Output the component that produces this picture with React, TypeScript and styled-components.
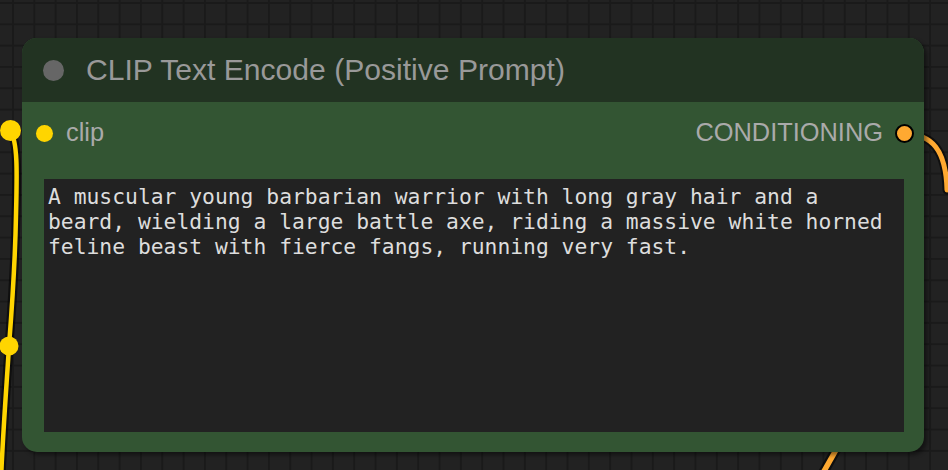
import React from "react";
import styled, { createGlobalStyle } from "styled-components";

const GlobalStyle = createGlobalStyle`
  html, body {
    margin: 0;
    padding: 0;
    background: #222222;
    overflow: hidden;
  }
`;

const Canvas = styled.div`
  position: relative;
  width: 948px;
  height: 470px;
  box-sizing: border-box;
  padding: 38px 0 0 22px;
  overflow: hidden;
  background-color: #222222;
  background-image:
    linear-gradient(to right, #1a1a1a 2px, transparent 2px),
    linear-gradient(to bottom, #1a1a1a 2px, transparent 2px);
  background-size: 21.33px 21.33px;
  background-position: 12px 2px;
`;

const Wires = styled.svg`
  position: absolute;
  left: 0;
  top: 0;
  width: 948px;
  height: 470px;
  z-index: 0;
  pointer-events: none;
`;

const Node = styled.div`
  position: relative;
  z-index: 1;
  width: 902px;
  height: 414px;
  border-radius: 15px;
  overflow: hidden;
  display: flex;
  flex-direction: column;
  background: #335533;
  box-shadow: 3px 3px 4px rgba(0, 0, 0, 0.45);
  font-family: "Liberation Sans", Arial, sans-serif;
`;

const TitleBar = styled.div`
  height: 64px;
  flex: none;
  display: flex;
  align-items: center;
  background: #223322;
  padding-left: 21px;
  gap: 22px;
`;

const TitleDot = styled.span`
  width: 21px;
  height: 21px;
  border-radius: 50%;
  background: #666666;
  flex: none;
`;

const Title = styled.span`
  color: #999999;
  font-size: 30.1px;
  line-height: 1;
  white-space: nowrap;
`;

const Body = styled.div`
  flex: 1;
  display: flex;
  flex-direction: column;
  padding: 0 20px 20px 22px;
`;

const SlotRow = styled.div`
  height: 62px;
  display: flex;
  align-items: center;
  justify-content: space-between;
  margin: 0 -10px 0 -10px;
  flex: none;
`;

const Slot = styled.div<{ $side: "in" | "out" }>`
  display: flex;
  align-items: center;
  flex-direction: ${(p) => (p.$side === "in" ? "row" : "row-reverse")};
  gap: ${(p) => (p.$side === "in" ? "13px" : "12px")};
  padding-left: ${(p) => (p.$side === "in" ? "2px" : "0")};
`;

const SlotDot = styled.span<{ $color: string; $ring?: boolean }>`
  width: ${(p) => (p.$ring ? "15px" : "17px")};
  height: ${(p) => (p.$ring ? "15px" : "17px")};
  border-radius: 50%;
  background: ${(p) => p.$color};
  border: ${(p) => (p.$ring ? "2px solid #000" : "none")};
  flex: none;
`;

const SlotLabel = styled.span`
  color: #aaaaaa;
  font-size: 25.4px;
  line-height: 1;
  white-space: nowrap;
`;

const PromptBox = styled.div`
  margin-top: 15px;
  flex: 1;
  background: #222222;
  color: #dddddd;
  box-sizing: border-box;
  padding: 5px 4px 4px 4px;
  font-family: "DejaVu Sans Mono", "Liberation Mono", monospace;
  font-size: 21.33px;
  line-height: 25px;
  white-space: pre-wrap;
  word-wrap: break-word;
`;

const prompt =
  "A muscular young barbarian warrior with long gray hair and a beard, wielding a large battle axe, riding a massive white horned feline beast with fierce fangs, running very fast.";

export default function App() {
  return (
    <>
      <GlobalStyle />
      <Canvas>
        <Wires viewBox="0 0 948 470">
          <g fill="none" strokeLinecap="round">
            <path
              d="M 10 131 C 18 140, 17 175, 16 215 C 15 270, 11 320, 9 346 C 7 380, 3 430, 1 480"
              stroke="#000"
              strokeOpacity="0.55"
              strokeWidth="9"
            />
            <path
              d="M 10 131 C 18 140, 17 175, 16 215 C 15 270, 11 320, 9 346 C 7 380, 3 430, 1 480"
              stroke="#FFD500"
              strokeWidth="4.5"
            />
            <path
              d="M 905 134 C 932 134, 946 150, 947 190"
              stroke="#000"
              strokeOpacity="0.55"
              strokeWidth="9"
            />
            <path
              d="M 905 134 C 932 134, 946 150, 947 190"
              stroke="#FFA931"
              strokeWidth="5"
            />
            <path d="M 853 420 L 819 480" stroke="#000" strokeOpacity="0.55" strokeWidth="10" />
            <path d="M 853 420 L 819 480" stroke="#FFA931" strokeWidth="5.5" />
          </g>
          <circle cx="10.5" cy="130.5" r="10.5" fill="#FFD500" />
          <circle cx="9" cy="346" r="9.5" fill="#FFD500" />
        </Wires>
        <Node>
          <TitleBar>
            <TitleDot />
            <Title>CLIP Text Encode (Positive Prompt)</Title>
          </TitleBar>
          <Body>
            <SlotRow>
              <Slot $side="in">
                <SlotDot $color="#FFD500" />
                <SlotLabel>clip</SlotLabel>
              </Slot>
              <Slot $side="out">
                <SlotDot $color="#FFA931" $ring />
                <SlotLabel>CONDITIONING</SlotLabel>
              </Slot>
            </SlotRow>
            <PromptBox>{prompt}</PromptBox>
          </Body>
        </Node>
      </Canvas>
    </>
  );
}
